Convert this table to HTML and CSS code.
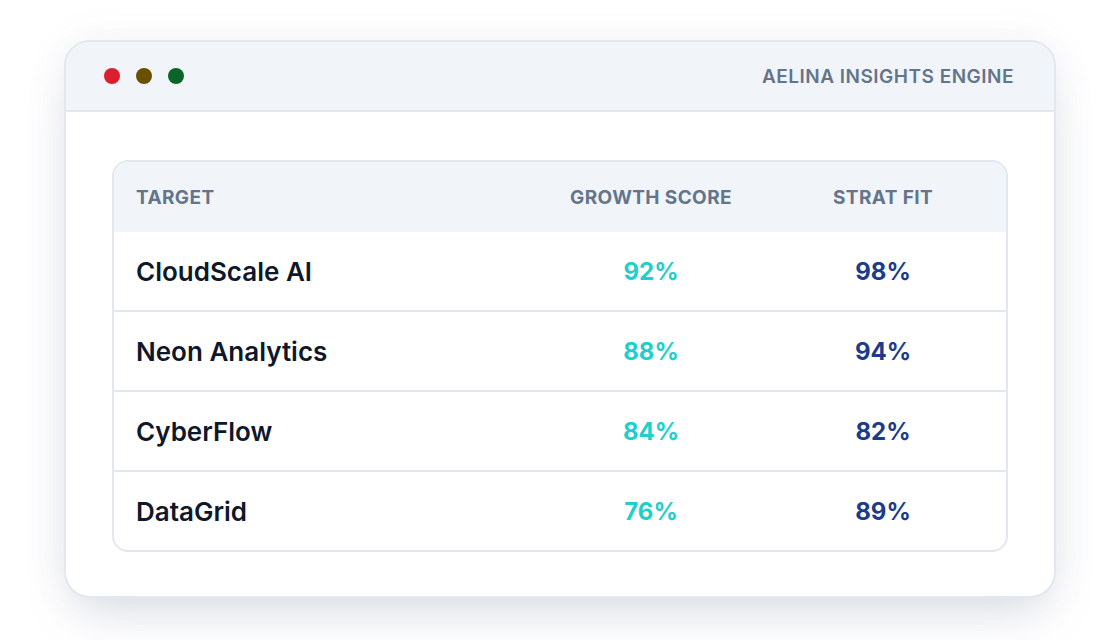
FILE: index.html
```html
<!DOCTYPE html>
<html lang="en">
<head>
<meta charset="utf-8">
<title>Aelina Insights Engine</title>
<link rel="stylesheet" href="styles.css">
</head>
<body>
<div class="window">
  <div class="titlebar">
    <div class="dots">
      <span class="dot dot-red"></span>
      <span class="dot dot-yellow"></span>
      <span class="dot dot-green"></span>
    </div>
    <div class="app-title">AELINA INSIGHTS ENGINE</div>
  </div>
  <div class="content">
    <div class="table">
      <div class="row head">
        <div class="cell name">TARGET</div>
        <div class="cell num">GROWTH SCORE</div>
        <div class="cell num">STRAT FIT</div>
      </div>
      <div class="row">
        <div class="cell name">CloudScale AI</div>
        <div class="cell num growth">92%</div>
        <div class="cell num fit">98%</div>
      </div>
      <div class="row">
        <div class="cell name">Neon Analytics</div>
        <div class="cell num growth">88%</div>
        <div class="cell num fit">94%</div>
      </div>
      <div class="row">
        <div class="cell name">CyberFlow</div>
        <div class="cell num growth">84%</div>
        <div class="cell num fit">82%</div>
      </div>
      <div class="row">
        <div class="cell name">DataGrid</div>
        <div class="cell num growth">76%</div>
        <div class="cell num fit">89%</div>
      </div>
    </div>
  </div>
</div>
</body>
</html>
```

FILE: styles.css
```css
* { box-sizing: border-box; }
html, body { margin: 0; padding: 0; background: #ffffff; }
html { min-height: 640px; }
body {
  min-height: 640px;
  font-family: Inter, "Noto Sans", "Liberation Sans", sans-serif;
  padding: 40px 40px 0 64px;
}
.window {
  width: 992px;
  height: 558px;
  border: 2px solid #e2e8f0;
  border-radius: 26px;
  background: #ffffff;
  overflow: hidden;
  box-shadow: 0 25px 50px -12px rgba(100, 116, 139, 0.22), 0 0 40px rgba(100, 116, 139, 0.08);
}
.titlebar {
  height: 70px;
  background: #f1f5f9;
  border-bottom: 2px solid #e2e8f0;
  display: flex;
  align-items: center;
  justify-content: space-between;
  padding: 0 40px 0 38px;
}
.dots { display: flex; gap: 16px; }
.dot { width: 16px; height: 16px; border-radius: 50%; display: block; }
.dot-red { background: #dc1f2d; }
.dot-yellow { background: #6b4f00; }
.dot-green { background: #0b6428; }
.app-title {
  font-size: 19px;
  font-weight: 600;
  color: #64748b;
  letter-spacing: 0.5px;
}
.content { padding: 48px 46px 0 46px; }
.table {
  border: 2px solid #e2e8f0;
  border-radius: 16px;
  overflow: hidden;
}
.row {
  display: grid;
  grid-template-columns: 1fr 218px 246px;
  align-items: center;
  height: 80px;
  border-bottom: 2px solid #e2e8f0;
}
.row:last-child { border-bottom: none; height: 78px; }
.row.head {
  height: 70px;
  background: #f1f5f9;
  border-bottom: none;
}
.cell { white-space: nowrap; }
.name { padding-left: 22px; font-size: 26px; font-weight: 600; color: #0f172a; }
.num { text-align: center; font-size: 24px; font-weight: 700; }
.head .cell {
  font-size: 19px;
  font-weight: 700;
  color: #64748b;
  letter-spacing: 0.4px;
}
.growth { color: #1fcfcc; }
.fit { color: #1e3a8a; }
```
